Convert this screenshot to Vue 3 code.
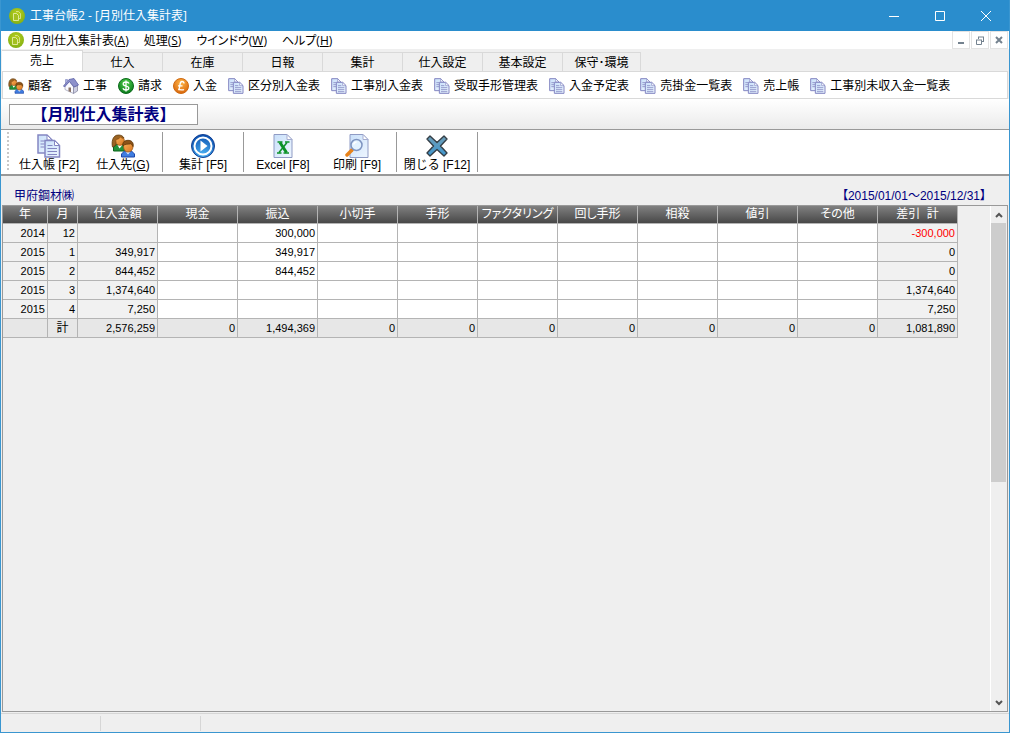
<template>
  <div class="window">
    <svg class="defs" aria-hidden="true">
      <defs>
        <linearGradient id="paper" x1="0" y1="0" x2="1" y2="1">
          <stop offset="0" stop-color="#c9e0fa" />
          <stop offset="1" stop-color="#eef6ff" />
        </linearGradient>
        <radialGradient id="lime" cx="0.5" cy="0.35" r="0.7">
          <stop offset="0" stop-color="#b9cf1e" />
          <stop offset="1" stop-color="#7fae12" />
        </radialGradient>
        <radialGradient id="green" cx="0.5" cy="0.3" r="0.7">
          <stop offset="0" stop-color="#4fd04a" />
          <stop offset="1" stop-color="#0b7a1c" />
        </radialGradient>
        <radialGradient id="orange" cx="0.5" cy="0.3" r="0.7">
          <stop offset="0" stop-color="#ffb648" />
          <stop offset="1" stop-color="#d8660c" />
        </radialGradient>
        <radialGradient id="blue" cx="0.5" cy="0.9" r="0.9">
          <stop offset="0" stop-color="#4bb4f5" />
          <stop offset="1" stop-color="#0b4fae" />
        </radialGradient>
        <linearGradient id="skin" x1="0" y1="0" x2="1" y2="1">
          <stop offset="0" stop-color="#f9b25c" />
          <stop offset="1" stop-color="#d9761f" />
        </linearGradient>
        <linearGradient id="steel" x1="0" y1="0" x2="0" y2="1">
          <stop offset="0" stop-color="#6f9fb8" />
          <stop offset="1" stop-color="#3f97cf" />
        </linearGradient>
      </defs>

      <symbol id="icon-app" viewBox="0 0 16 16">
        <circle cx="8" cy="8" r="8" fill="url(#lime)" />
        <path d="M7 3.500h2.500l2 2v5h-1.500" fill="none" stroke="#e3ea9c" stroke-width="0.800" />
        <path d="M4.500 5.500h3l2 2v5h-5z" fill="#a3c020" stroke="#eef2b8" stroke-width="0.800" />
      </symbol>

      <symbol id="icon-copy" viewBox="0 0 24 24">
        <path d="M1 1h9l5 5v13H1z" fill="url(#paper)" stroke="#8486c2" stroke-width="1.500" />
        <path d="M10 1v5h5z" fill="#fff" stroke="#8486c2" />
        <path d="M3.500 7h4M3.500 10h4M3.500 13h4" stroke="#8486c2" stroke-width="1.200" />
        <path d="M8 6.500h9.500l5 5V23H8z" fill="url(#paper)" stroke="#8486c2" stroke-width="1.500" />
        <path d="M17.500 6.500v5h5z" fill="#fff" stroke="#8486c2" />
        <path d="M10.500 11.500h5M10.500 14.500h9.500M10.500 17.500h9.500M10.500 20.500h9.500" stroke="#8486c2" stroke-width="1.200" />
      </symbol>

      <symbol id="icon-people" viewBox="0 0 24 24">
        <path d="M2.500 17v-4l3-2.500h6l3 2.500v4z" fill="#22913a" stroke="#0b6418" />
        <path d="M6.500 11l2 3.500 3-3.500z" fill="#fff" />
        <path d="M1.500 13C.5 9 1 1 7.500 1 10 1 12 2 13 4L5.500 5.500 5 11z" fill="#9a6424" stroke="#5f3708" stroke-width="0.800" />
        <path d="M5 5.500C7.500 5.500 8.500 4 9.500 3c1 1 2.500 1.500 3.500 1.500.8 3.500-.5 6.800-4 6.800S4.700 8.500 5 5.500z" fill="url(#skin)" stroke="#9b5512" stroke-width="0.800" />
        <path d="M10.500 23v-3l3-3h7l3 3v3z" fill="#3f7de0" stroke="#1c46a8" />
        <path d="M14.500 17.500l2.500 3 2.500-3z" fill="#dce9ff" />
        <path d="M12.500 11.500c0-3 1.500-4 4.500-4s5 1.500 5 4.500-1.500 6-5 6-4.500-3.500-4.500-6.500z" fill="url(#skin)" stroke="#9b5512" stroke-width="0.800" />
        <path d="M12 12c-1-4 2-5.700 5-5.700s6 1.700 5 6.200c-.8-1.500-1.500-2.200-2.300-2.700C17.500 10.500 14 9.500 12 12z" fill="#8a5218" stroke="#5f3708" stroke-width="0.800" />
      </symbol>

      <symbol id="icon-house" viewBox="0 0 16 16">
        <path d="M2 8l4.500-4.500L10.500 9v6.500L4 12.500 2 11.500z" fill="#fafaff" stroke="#a5a6bd" stroke-width="0.800" />
        <path d="M10.500 9l4-1.500v5.500l-4 2.500z" fill="#cfd0e2" stroke="#8a8ba5" stroke-width="0.800" />
        <path d="M.5 8L6 1.500l5-1L15.500 7 11 9 6.500 3.500 1.500 9z" fill="#8d91cb" stroke="#5a5fa6" stroke-width="0.800" />
        <path d="M2.500 1.500h2v2l-2 2z" fill="#a9aedd" stroke="#6f74b4" stroke-width="0.500" />
        <path d="M5.500 9.500H8v4.800l-2.500-1z" fill="#8a7468" />
      </symbol>

      <symbol id="icon-dollar" viewBox="0 0 16 16">
        <circle cx="8" cy="8" r="7.500" fill="url(#green)" stroke="#0c6a1c" />
        <path d="M11 5.500C10.500 4.200 9.300 4 8 4 6.300 4 5.200 4.800 5.200 6c0 2.800 5.600 1.300 5.600 4 0 1.200-1.200 2-2.800 2s-2.700-.6-3.100-1.800M8 2.500v11" fill="none" stroke="#fff" stroke-width="1.300" />
      </symbol>

      <symbol id="icon-pound" viewBox="0 0 16 16">
        <circle cx="8" cy="8" r="7.500" fill="url(#orange)" stroke="#cf6a10" />
        <path d="M11 5.500C11 4 10 3.500 9 3.500c-3.200 0-1 5-3.500 8.500 2-1 3.500.8 5.500-.5M5 7.800h4.500" fill="none" stroke="#fff" stroke-width="1.300" />
      </symbol>

      <symbol id="icon-play" viewBox="0 0 24 24">
        <circle cx="12" cy="12" r="11.500" fill="url(#blue)" stroke="#123f94" />
        <circle cx="12" cy="12" r="8.500" fill="none" stroke="#fff" stroke-width="2" />
        <path d="M9.500 6.500l7 5.500-7 5.500z" fill="#fff" />
      </symbol>

      <symbol id="icon-excel" viewBox="0 0 24 24">
        <path d="M3 .5h13l5 5v18H3z" fill="url(#paper)" stroke="#8f9bc4" />
        <path d="M16 .5v5h5z" fill="#fff" stroke="#a5add0" />
        <path d="M6.500 8h5M14 8h4.500M6 19h4.500M12.500 19h5.500" stroke="#0a9127" stroke-width="1.300" />
        <path d="M9 8.500l6.500 10" stroke="#0a9127" stroke-width="3" />
        <path d="M16 8.500l-8 10" stroke="#0a9127" stroke-width="1.500" />
      </symbol>

      <symbol id="icon-preview" viewBox="0 0 24 24">
        <path d="M5 .5h13l5 5v18H5z" fill="url(#paper)" stroke="#8f9bc4" />
        <path d="M18 .5v5h5z" fill="#fff" stroke="#a5add0" />
        <path d="M2 21l5-5" stroke="#e8831a" stroke-width="3.500" stroke-linecap="round" />
        <circle cx="11.500" cy="11" r="5.500" fill="#e3f2ff" stroke="#7e94c0" stroke-width="1.500" />
        <path d="M8.500 10.500c.5-1.500 1.500-2.300 3-2.500" fill="none" stroke="#fff" stroke-width="1.500" />
      </symbol>

      <symbol id="icon-cross" viewBox="0 0 24 24">
        <path d="M5 2l7 6.500L19 2l3 3-6.500 7 6.500 7-3 3-7-6.500L5 22l-3-3 6.500-7L2 5z" fill="url(#steel)" stroke="#343e46" stroke-width="1.400" stroke-linejoin="round" />
      </symbol>
    </svg>

    <header class="title-bar">
      <svg class="app-icon"><use href="#icon-app" /></svg>
      <span class="title-text">工事台帳2 - [月別仕入集計表]</span>
      <button class="win-btn" type="button" aria-label="最小化">
        <svg viewBox="0 0 10 10"><path d="M0 5.500h10" /></svg>
      </button>
      <button class="win-btn" type="button" aria-label="最大化">
        <svg viewBox="0 0 10 10"><path d="M.5 .5h9v9h-9z" /></svg>
      </button>
      <button class="win-btn" type="button" aria-label="閉じる">
        <svg viewBox="0 0 10 10"><path d="M0 0l10 10M10 0L0 10" /></svg>
      </button>
    </header>

    <nav class="menu-bar">
      <svg class="app-icon"><use href="#icon-app" /></svg>
      <button v-for="m in menus" :key="m.key" class="menu-item" type="button">{{ m.label }}(<u>{{ m.key }}</u>)</button>
      <div class="mdi-buttons">
        <button class="mdi-btn" type="button" aria-label="最小化">
          <svg viewBox="0 0 10 10"><path d="M2 8h6" stroke-width="2" /></svg>
        </button>
        <button class="mdi-btn" type="button" aria-label="元に戻す">
          <svg viewBox="0 0 10 10"><path d="M3 2h6M8.500 2v4M1 5h6M1.500 5v4.500h5V5M3.500 2v2M7 6.500h2" /></svg>
        </button>
        <button class="mdi-btn" type="button" aria-label="閉じる">
          <svg viewBox="0 0 10 10"><path d="M2 2l6 6M8 2L2 8" stroke-width="2" /></svg>
        </button>
      </div>
    </nav>

    <div class="tabs" role="tablist">
      <button
        v-for="(tab, i) in tabs"
        :key="tab"
        class="tab"
        :class="{ active: i === activeTab }"
        type="button"
        role="tab"
        :aria-selected="i === activeTab"
        @click="activeTab = i"
      >{{ tab }}</button>
    </div>

    <div class="shortcut-bar">
      <button v-for="s in shortcuts" :key="s.label" class="shortcut" type="button">
        <svg><use :href="'#icon-' + s.icon" /></svg>
        <span>{{ s.label }}</span>
      </button>
    </div>

    <div class="heading-bar">
      <h1 class="heading">【月別仕入集計表】</h1>
    </div>

    <div class="tool-bar">
      <span class="grip"></span>
      <div v-for="(group, g) in tools" :key="g" class="tool-group">
        <button v-for="t in group" :key="t.label" class="tool" type="button">
          <svg><use :href="'#icon-' + t.icon" /></svg>
          <span v-if="t.key">{{ t.label }}(<u>{{ t.key }}</u>)</span>
          <span v-else>{{ t.label }}</span>
        </button>
      </div>
    </div>

    <div class="info">
      <span>甲府鋼材㈱</span>
      <span>【2015/01/01～2015/12/31】</span>
    </div>

    <main class="grid-panel">
      <div class="grid-area">
        <table class="grid">
          <colgroup>
            <col class="col-year">
            <col class="col-month">
            <col v-for="n in 11" :key="n" class="col-amount">
          </colgroup>
          <thead>
            <tr>
              <th v-for="c in columns" :key="c">{{ c }}</th>
            </tr>
          </thead>
          <tbody>
            <tr v-for="(row, r) in rows" :key="r">
              <td
                v-for="(cell, c) in row"
                :key="c"
                :class="{ fixed: c < 3 || c === 12, negative: cell.startsWith('-') }"
              >{{ cell }}</td>
            </tr>
          </tbody>
          <tfoot>
            <tr>
              <td v-for="(cell, c) in totals" :key="c" :class="{ caption: c === 1 }">{{ cell }}</td>
            </tr>
          </tfoot>
        </table>
      </div>
      <div class="scrollbar">
        <button class="scroll-btn" type="button" aria-label="上へ">
          <svg viewBox="0 0 8 6"><path d="M1 5l3-3 3 3" /></svg>
        </button>
        <div class="track"><div class="thumb"></div></div>
        <button class="scroll-btn" type="button" aria-label="下へ">
          <svg viewBox="0 0 8 6"><path d="M1 1l3 3 3-3" /></svg>
        </button>
      </div>
    </main>

    <footer class="status-bar">
      <span class="status-cell"></span>
      <span class="status-cell"></span>
    </footer>
  </div>
</template>

<script setup>
import { ref } from 'vue'

const menus = [
  { label: '月別仕入集計表', key: 'A' },
  { label: '処理', key: 'S' },
  { label: 'ウインドウ', key: 'W' },
  { label: 'ヘルプ', key: 'H' }
]

const tabs = ['売上', '仕入', '在庫', '日報', '集計', '仕入設定', '基本設定', '保守･環境']
const activeTab = ref(0)

const shortcuts = [
  { label: '顧客', icon: 'people' },
  { label: '工事', icon: 'house' },
  { label: '請求', icon: 'dollar' },
  { label: '入金', icon: 'pound' },
  { label: '区分別入金表', icon: 'copy' },
  { label: '工事別入金表', icon: 'copy' },
  { label: '受取手形管理表', icon: 'copy' },
  { label: '入金予定表', icon: 'copy' },
  { label: '売掛金一覧表', icon: 'copy' },
  { label: '売上帳', icon: 'copy' },
  { label: '工事別未収入金一覧表', icon: 'copy' }
]

const tools = [
  [
    { label: '仕入帳 [F2]', icon: 'copy' },
    { label: '仕入先', key: 'G', icon: 'people' }
  ],
  [{ label: '集計 [F5]', icon: 'play' }],
  [
    { label: 'Excel [F8]', icon: 'excel' },
    { label: '印刷 [F9]', icon: 'preview' }
  ],
  [{ label: '閉じる [F12]', icon: 'cross' }]
]

const columns = ['年', '月', '仕入金額', '現金', '振込', '小切手', '手形', 'ファクタリング', '回し手形', '相殺', '値引', 'その他', '差引  計']

// purchase, cash, transfer, then seven unused payment kinds and the balance
function makeRow(year, month, purchase, transfer, balance) {
  return [year, month, purchase, '', transfer, '', '', '', '', '', '', '', balance]
}

const rows = [
  makeRow('2014', '12', '', '300,000', '-300,000'),
  makeRow('2015', '1', '349,917', '349,917', '0'),
  makeRow('2015', '2', '844,452', '844,452', '0'),
  makeRow('2015', '3', '1,374,640', '', '1,374,640'),
  makeRow('2015', '4', '7,250', '', '7,250')
]

const totals = ['', '計', '2,576,259', '0', '1,494,369', '0', '0', '0', '0', '0', '0', '0', '1,081,890']
</script>

<style>
body {
  margin: 0;
}
</style>

<style scoped>
.window {
  box-sizing: border-box;
  min-height: 100vh;
  display: flex;
  flex-direction: column;
  border: 1px solid #3a96d0;
  border-top: none;
  background: #efefef;
  color: #000;
  font-family: "Liberation Sans", "Noto Sans CJK JP", sans-serif;
  font-size: 12px;
  line-height: 16px;
}

.defs {
  position: absolute;
  width: 0;
  height: 0;
}

button {
  margin: 0;
  padding: 0;
  border: none;
  background: none;
  color: inherit;
  font: inherit;
  white-space: nowrap;
}

.title-bar {
  display: flex;
  align-items: center;
  height: 31px;
  padding-left: 8px;
  background: #2a8dcd;
  color: #fff;
  font-family: "Open Sans", "Noto Sans CJK JP", sans-serif;
}

.app-icon {
  width: 16px;
  height: 16px;
  margin-right: 5px;
}

.title-text {
  flex: 1;
}

.win-btn {
  width: 46px;
  height: 30px;
  display: flex;
  align-items: center;
  justify-content: center;
}

.win-btn svg {
  width: 10px;
  height: 10px;
  fill: none;
  stroke: #fff;
}

.menu-bar {
  display: flex;
  align-items: center;
  height: 18px;
  padding-left: 7px;
  background: #fff;
  font-family: "Open Sans", "Noto Sans CJK JP", sans-serif;
  font-feature-settings: "palt";
}

.menu-item {
  padding: 1px 14px 0 1px;
}

.mdi-buttons {
  display: flex;
  gap: 1px;
  margin-left: auto;
  margin-right: 1px;
}

.mdi-btn {
  box-sizing: border-box;
  width: 18px;
  height: 18px;
  display: flex;
  align-items: center;
  justify-content: center;
  border: 1px solid #e3e3e3;
  background: #fff;
}

.mdi-btn svg {
  width: 10px;
  height: 10px;
  fill: none;
  stroke: #74828f;
}

.tabs {
  display: flex;
  align-items: flex-end;
  height: 22px;
  padding-left: 1px;
}

.tab {
  box-sizing: border-box;
  width: 80px;
  height: 19px;
  padding-top: 2px;
  border-top: 1px solid #d9d9d9;
  border-right: 1px solid #d9d9d9;
}

.tab:last-child {
  width: 78px;
}

.tab.active {
  width: 81px;
  height: 21px;
  padding-top: 0;
  background: #fff;
}

.shortcut-bar {
  display: flex;
  align-items: center;
  gap: 11px;
  height: 24px;
  margin: 0 1px;
  padding-top: 2px;
  padding-left: 5px;
  border: 1px solid #d9d9d9;
  background: #fff;
}

.shortcut {
  display: flex;
  align-items: center;
  gap: 4px;
}

.shortcut svg {
  width: 16px;
  height: 16px;
}

.heading-bar {
  display: flex;
  align-items: center;
  height: 30px;
  padding-left: 8px;
  background: linear-gradient(#fff, #ebebeb);
}

.heading {
  box-sizing: border-box;
  width: 189px;
  height: 21px;
  margin: 0;
  border: 1px solid #999;
  background: #fff;
  color: #000080;
  font-size: 16px;
  font-weight: bold;
  line-height: 19px;
  text-align: center;
}

.tool-bar {
  display: flex;
  align-items: center;
  height: 44px;
  padding-left: 6px;
  border-top: 1px solid #999;
  border-bottom: 2px solid #999;
  background: #fff;
}

.grip {
  width: 2px;
  height: 40px;
  margin-right: 1px;
  background: repeating-linear-gradient(#c8c8c8 0 2px, #fff 2px 4px);
}

.tool-group {
  display: flex;
  justify-content: center;
  min-width: 81px;
  height: 40px;
  padding: 0 2px;
  box-sizing: border-box;
  border-right: 1px solid #999;
}

.tool {
  min-width: 74px;
  display: flex;
  flex-direction: column;
  align-items: center;
  padding-top: 2px;
  line-height: 14px;
}

.tool svg {
  width: 24px;
  height: 24px;
  flex: none;
}

.info {
  display: flex;
  justify-content: space-between;
  align-items: flex-end;
  height: 28px;
  padding: 0 23px 1px 13px;
  color: #000080;
  font-feature-settings: "palt";
}

.grid-panel {
  flex: 1;
  display: flex;
  margin: 0 1px 1px;
  border: 1px solid #999;
}

.grid-area {
  flex: 1;
  overflow: hidden;
}

.grid {
  width: 955px;
  table-layout: fixed;
  border-collapse: separate;
  border-spacing: 0;
}

.col-year {
  width: 45px;
}

.col-month {
  width: 30px;
}

.col-amount {
  width: 80px;
}

th,
td {
  box-sizing: border-box;
  padding: 0 2px 1px;
  border-right: 1px solid #b4b4b4;
  border-bottom: 1px solid #b4b4b4;
  white-space: pre;
}

th {
  height: 18px;
  padding: 0 0 1px;
  background: linear-gradient(#808080, #484848);
  color: #fff;
  font-weight: normal;
  font-feature-settings: "palt";
}

td {
  height: 19px;
  background: #fff;
  font-size: 11px;
  text-align: right;
}

td.fixed {
  background: #f1f1f1;
}

td.negative {
  color: #f00;
}

tfoot td {
  background: #e7e7e7;
}

tfoot td.caption {
  font-size: 12px;
  text-align: center;
}

.scrollbar {
  display: flex;
  flex-direction: column;
  width: 15px;
  padding-right: 1px;
  border-left: 1px solid #fff;
}

.scroll-btn {
  height: 17px;
  display: flex;
  align-items: center;
  justify-content: center;
}

.scroll-btn svg {
  width: 8px;
  height: 6px;
  fill: none;
  stroke: #555;
  stroke-width: 2;
}

.track {
  flex: 1;
  display: flex;
  flex-direction: column;
}

.thumb {
  flex: 0 0 55%;
  background: #cdcdcd;
}

.status-bar {
  display: flex;
  height: 15px;
  padding-top: 2px;
  padding-bottom: 1px;
  border-top: 1px solid #d6d6d6;
}

.status-cell {
  box-sizing: border-box;
  width: 100px;
  border-right: 1px solid #d6d6d6;
}
</style>
